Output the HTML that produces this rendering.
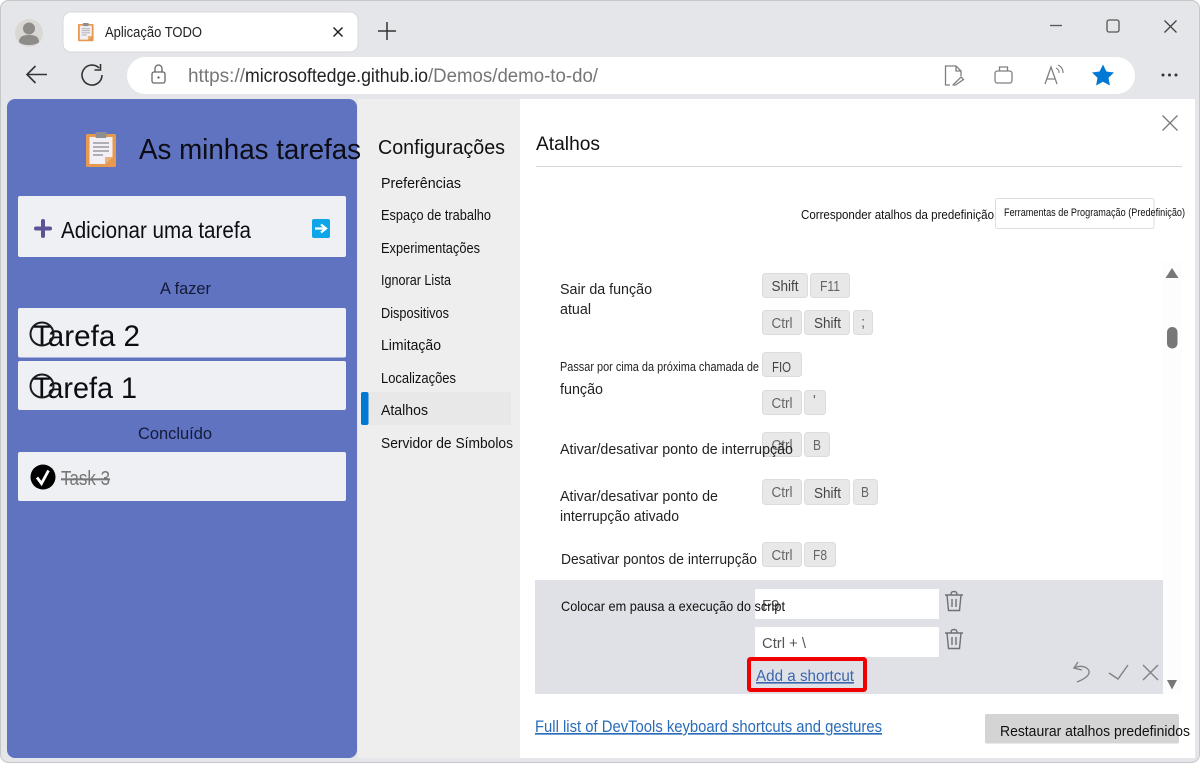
<!DOCTYPE html>
<html><head><meta charset="utf-8"><title>Aplicação TODO</title>
<style>
html,body{margin:0;padding:0;background:#fff;width:1200px;height:763px;overflow:hidden}
svg{display:block;filter:blur(.3px)}
text{font-family:"Liberation Sans",sans-serif;white-space:pre}
.k{fill:#e8e8e8;stroke:#dcdcdc;stroke-width:1}
.kt{font-size:15px;fill:#444}
.kg{font-size:15px;fill:#666}
.s{font-size:14.5px;fill:#111}
.r{font-size:15px;fill:#222}
.i{fill:none;stroke:#808184;stroke-width:1.4}
</style></head><body>
<svg width="1200" height="763" viewBox="0 0 1200 763" xmlns="http://www.w3.org/2000/svg">
<defs>
<g id="clip">
<rect x="0" y="2" width="30" height="33" rx="1.5" fill="#e79a4f"/>
<path d="M3.5 5H26.500V25L19 32H3.500Z" fill="#f2f0f6"/>
<path d="M19 32V25H26.500Z" fill="#e9b27a"/>
<rect x="9.500" y="0" width="11" height="6" rx="1" fill="#8f8f92"/>
<path d="M7 11H23M7 15H23M7 19H23M7 23H17" stroke="#9a9a9e" stroke-width="1.400"/>
</g>
<g id="trash" fill="none" stroke="#6f7175" stroke-width="1.400">
<path d="M0 4H18M6 4C6 1 7 .5 9 .5S12 1 12 4M2 4L3.500 19.500H14.500L16 4M7 8V16M11 8V16"/>
</g>
</defs>

<rect x="0.5" y="0.5" width="1199" height="762" rx="8" fill="#e5e6ea" stroke="#c6c7c9"/>

<!-- avatar -->
<circle cx="29" cy="33" r="14" fill="#d9d8d5"/>
<circle cx="29" cy="28.500" r="6" fill="#8e8c89"/>
<path d="M19 42C19 36 24 35 29 35S39 36 39 42C36 46 22 46 19 42Z" fill="#8e8c89"/>

<!-- tab -->
<rect x="63" y="12" width="295" height="40" rx="8" fill="#fff" stroke="#d8d9dc" stroke-width="1"/>
<g transform="translate(78 23) scale(.52)"><use href="#clip"/></g>
<text x="105" y="37" font-size="15" fill="#222" textLength="97" lengthAdjust="spacingAndGlyphs">Aplicação TODO</text>
<path d="M333.500 27.500L342.500 36.500M342.500 27.500L333.500 36.500" stroke="#222" stroke-width="1.500" fill="none"/>
<path d="M387 22V40M378 31H396" stroke="#333" stroke-width="1.500" fill="none"/>

<!-- window controls -->
<path d="M1050 25.500H1062" stroke="#555" stroke-width="1.300"/>
<rect x="1107" y="20" width="12" height="12" rx="2" fill="none" stroke="#555" stroke-width="1.300"/>
<path d="M1164.500 20.500L1176.500 32.500M1176.500 20.500L1164.500 32.500" stroke="#444" stroke-width="1.300"/>

<!-- nav -->
<path d="M47 74.500H27M35.500 66L27 74.500L35.500 83" fill="none" stroke="#333" stroke-width="1.600"/>
<path d="M99 67.900A10 10 0 1 0 102 75" fill="none" stroke="#333" stroke-width="1.600"/>
<path d="M94.500 70H100.500V64" fill="none" stroke="#333" stroke-width="1.600"/>

<!-- address bar -->
<rect x="127" y="57" width="1008" height="37" rx="18.500" fill="#fff"/>
<rect x="152" y="72" width="13" height="11" rx="2" fill="none" stroke="#666" stroke-width="1.300"/>
<path d="M155 72V68.500A3.500 3.500 0 0 1 162 68.500V72" fill="none" stroke="#666" stroke-width="1.300"/>
<circle cx="158.500" cy="77.500" r="1.100" fill="#555"/>
<text x="188" y="82" font-size="19" fill="#767676" textLength="57" lengthAdjust="spacingAndGlyphs">https://</text>
<text x="245" y="82" font-size="19" fill="#222" textLength="183" lengthAdjust="spacingAndGlyphs">microsoftedge.github.io</text>
<text x="428" y="82" font-size="19" fill="#767676" textLength="170" lengthAdjust="spacingAndGlyphs">/Demos/demo-to-do/</text>

<path d="M950 85H945.500V66H956L961 71V76M956 66V71H961M953 85L961 77L963.500 79.500L955.500 85H952.500Z" fill="none" stroke="#808080" stroke-width="1.300"/>
<rect x="995" y="71" width="17" height="12" rx="2.500" fill="none" stroke="#808080" stroke-width="1.300"/>
<path d="M999.500 71V67H1007.500V71" fill="none" stroke="#808080" stroke-width="1.300"/>
<path d="M1045 84L1051 67L1057 84M1047 79H1055" fill="none" stroke="#808080" stroke-width="1.300"/>
<path d="M1056 68A5 5 0 0 1 1059 73M1058 65A8 8 0 0 1 1063 73" fill="none" stroke="#808080" stroke-width="1.100"/>
<path d="M1103 64.500L1106.400 71.500L1114 72.500L1108.500 77.800L1109.900 85.500L1103 81.800L1096.100 85.500L1097.500 77.800L1092 72.500L1099.600 71.500Z" fill="#0078d4"/>
<circle cx="1163" cy="75" r="1.500" fill="#333"/><circle cx="1169.500" cy="75" r="1.500" fill="#333"/><circle cx="1176" cy="75" r="1.500" fill="#333"/>

<!-- panels -->
<rect x="358" y="99" width="162" height="659" fill="#eeeeee"/>
<rect x="520" y="99" width="675" height="659" fill="#fff"/>
<rect x="7" y="99" width="350" height="659" rx="8" fill="#5f73c1"/>

<!-- left app -->
<g transform="translate(86 132)"><use href="#clip"/></g>
<text x="139" y="159" font-size="29" fill="#0c0c14" textLength="222" lengthAdjust="spacingAndGlyphs">As minhas tarefas</text>
<rect x="18" y="196" width="328" height="61" rx="2" fill="#eef0f4"/>
<path d="M43 221V236M36 228.500H50" stroke="#5b5394" stroke-width="4" stroke-linecap="round"/>
<text x="61" y="238" font-size="23" fill="#0c0c14" textLength="190" lengthAdjust="spacingAndGlyphs">Adicionar uma tarefa</text>
<rect x="312" y="219" width="18" height="19" rx="2" fill="#0ea5e9"/>
<path d="M315 228.500H325M321 224.500L326 228.500L321 232.500" fill="none" stroke="#fff" stroke-width="2.200"/>
<text x="160" y="294" font-size="17" fill="#141a38" textLength="51" lengthAdjust="spacingAndGlyphs">A fazer</text>

<rect x="18" y="308" width="328" height="49.500" rx="2" fill="#eef0f4"/>
<text x="33" y="346" font-size="30" fill="#0c0c14" textLength="107" lengthAdjust="spacingAndGlyphs">Tarefa 2</text>
<circle cx="42" cy="334" r="11.500" fill="none" stroke="#1c1c1c" stroke-width="2"/>
<rect x="18" y="361" width="328" height="49" rx="2" fill="#eef0f4"/>
<text x="33" y="398" font-size="30" fill="#0c0c14" textLength="104" lengthAdjust="spacingAndGlyphs">Tarefa 1</text>
<circle cx="42" cy="386" r="11.500" fill="none" stroke="#1c1c1c" stroke-width="2"/>
<text x="138" y="439" font-size="17" fill="#141a38" textLength="74" lengthAdjust="spacingAndGlyphs">Concluído</text>
<rect x="18" y="452" width="328" height="49" rx="2" fill="#eef0f4"/>
<circle cx="43" cy="477" r="12.500" fill="#000"/>
<path d="M37 477.500L41.500 483.500L48.500 470.500" fill="none" stroke="#fff" stroke-width="2.800"/>
<text x="61" y="485" font-size="20" fill="#777" text-decoration="line-through" textLength="49" lengthAdjust="spacingAndGlyphs">Task 3</text>

<!-- sidebar -->
<rect x="361" y="392" width="150" height="33" fill="#e8e8e8"/>
<rect x="361" y="392" width="7.500" height="33" rx="2" fill="#0078d4"/>
<text x="378" y="154" font-size="20" fill="#111" textLength="127" lengthAdjust="spacingAndGlyphs">Configurações</text>
<text class="s" x="381" y="188" textLength="80" lengthAdjust="spacingAndGlyphs">Preferências</text>
<text class="s" x="381" y="220" textLength="110" lengthAdjust="spacingAndGlyphs">Espaço de trabalho</text>
<text class="s" x="381" y="253" textLength="99" lengthAdjust="spacingAndGlyphs">Experimentações</text>
<text class="s" x="381" y="285" textLength="70" lengthAdjust="spacingAndGlyphs">Ignorar Lista</text>
<text class="s" x="381" y="318" textLength="68" lengthAdjust="spacingAndGlyphs">Dispositivos</text>
<text class="s" x="381" y="350" textLength="60" lengthAdjust="spacingAndGlyphs">Limitação</text>
<text class="s" x="381" y="383" textLength="75" lengthAdjust="spacingAndGlyphs">Localizações</text>
<text class="s" x="381" y="415" textLength="47" lengthAdjust="spacingAndGlyphs">Atalhos</text>
<text class="s" x="381" y="448" textLength="132" lengthAdjust="spacingAndGlyphs">Servidor de Símbolos</text>

<!-- main -->
<text x="536" y="150" font-size="19" fill="#111" textLength="64" lengthAdjust="spacingAndGlyphs">Atalhos</text>
<rect x="536" y="166" width="646" height="1" fill="#d8d8d8"/>
<path d="M1162.500 115.500L1177.500 130.500M1177.500 115.500L1162.500 130.500" stroke="#777" stroke-width="1.300"/>
<text x="801" y="219" font-size="13" fill="#111" textLength="193" lengthAdjust="spacingAndGlyphs">Corresponder atalhos da predefinição</text>
<rect x="995.500" y="198.500" width="158.500" height="30" rx="2" fill="#fff" stroke="#dddddd"/>
<text x="1004" y="216" font-size="11" fill="#111" textLength="181" lengthAdjust="spacingAndGlyphs">Ferramentas de Programação (Predefinição)</text>

<!-- scrollbar column -->
<rect x="1163" y="262" width="19" height="432" fill="#fdfdfd"/>
<path d="M1172 268L1178.500 278H1165.500Z" fill="#777"/>
<rect x="1167" y="327" width="10.500" height="21.500" rx="5" fill="#777"/>

<!-- rows -->
<text class="r" x="560" y="294" textLength="92" lengthAdjust="spacingAndGlyphs">Sair da função</text>
<text class="r" x="560" y="314" textLength="31" lengthAdjust="spacingAndGlyphs">atual</text>

<rect class="k" x="762.500" y="273.500" width="45" height="24" rx="3"/><text class="kt" x="771.500" y="291" textLength="27" lengthAdjust="spacingAndGlyphs">Shift</text>
<rect class="k" x="810.500" y="273.500" width="39" height="24" rx="3"/><text class="kg" x="820" y="291" textLength="20" lengthAdjust="spacingAndGlyphs">F11</text>

<rect class="k" x="762.500" y="310.500" width="39" height="24" rx="3"/><text class="kg" x="771.500" y="328" textLength="21" lengthAdjust="spacingAndGlyphs">Ctrl</text>
<rect class="k" x="804.500" y="310.500" width="45" height="24" rx="3"/><text class="kt" x="814" y="328" textLength="27" lengthAdjust="spacingAndGlyphs">Shift</text>
<rect class="k" x="853.500" y="310.500" width="19" height="24" rx="3"/><text class="kg" x="861" y="327">;</text>

<text x="560" y="371" font-size="12.500" fill="#222" textLength="199" lengthAdjust="spacingAndGlyphs">Passar por cima da próxima chamada de</text>
<text class="r" x="560" y="394" textLength="43" lengthAdjust="spacingAndGlyphs">função</text>
<rect class="k" x="762.500" y="352.500" width="39" height="24" rx="3"/><text class="kt" x="772" y="372" textLength="19" lengthAdjust="spacingAndGlyphs">FIO</text>
<rect class="k" x="762.500" y="390.500" width="39" height="24" rx="3"/><text class="kg" x="771.500" y="408" textLength="21" lengthAdjust="spacingAndGlyphs">Ctrl</text>
<rect class="k" x="804.500" y="390.500" width="21" height="24" rx="3"/><text class="kg" x="813" y="405">'</text>

<rect class="k" x="762.500" y="432.500" width="39" height="24" rx="3"/><text class="kg" x="771.500" y="450" textLength="21" lengthAdjust="spacingAndGlyphs">Ctrl</text>
<rect class="k" x="804.500" y="432.500" width="25" height="24" rx="3"/><text class="kg" x="813" y="450" textLength="8" lengthAdjust="spacingAndGlyphs">B</text>
<text class="r" x="560" y="454" textLength="233" lengthAdjust="spacingAndGlyphs">Ativar/desativar ponto de interrupção</text>

<text class="r" x="560" y="501" textLength="158" lengthAdjust="spacingAndGlyphs">Ativar/desativar ponto de</text>
<text class="r" x="560" y="521" textLength="119" lengthAdjust="spacingAndGlyphs">interrupção ativado</text>
<rect class="k" x="762.500" y="479.500" width="39" height="25" rx="3"/><text class="kg" x="771.500" y="497" textLength="21" lengthAdjust="spacingAndGlyphs">Ctrl</text>
<rect class="k" x="804.500" y="479.500" width="45" height="25" rx="3"/><text class="kt" x="814" y="498" textLength="27" lengthAdjust="spacingAndGlyphs">Shift</text>
<rect class="k" x="853.500" y="479.500" width="24" height="25" rx="3"/><text class="kg" x="861" y="497" textLength="8" lengthAdjust="spacingAndGlyphs">B</text>

<text class="r" x="561" y="564" textLength="196" lengthAdjust="spacingAndGlyphs">Desativar pontos de interrupção</text>
<rect class="k" x="762.500" y="542.500" width="39" height="24" rx="3"/><text class="kg" x="771.500" y="560" textLength="21" lengthAdjust="spacingAndGlyphs">Ctrl</text>
<rect class="k" x="804.500" y="542.500" width="31" height="24" rx="3"/><text class="kg" x="813" y="560" textLength="14" lengthAdjust="spacingAndGlyphs">F8</text>

<!-- highlighted row -->
<rect x="535" y="580" width="628" height="114" fill="#dfe1e6"/>
<path d="M1172 689.500L1177 680H1167Z" fill="#777"/>
<rect x="755" y="589" width="184" height="30" rx="1" fill="#fff"/>
<rect x="755" y="627" width="184" height="30" rx="1" fill="#fff"/>
<text x="762" y="610" font-size="15" fill="#555">F9</text>
<text x="561" y="611" font-size="14" fill="#111" textLength="224" lengthAdjust="spacingAndGlyphs">Colocar em pausa a execução do script</text>
<text x="762" y="648" font-size="15" fill="#555" textLength="44" lengthAdjust="spacingAndGlyphs">Ctrl + \</text>
<g transform="translate(945 591)"><use href="#trash"/></g>
<g transform="translate(945 629)"><use href="#trash"/></g>
<rect x="749" y="659" width="116" height="31" rx="1.500" fill="none" stroke="#f00000" stroke-width="4"/>
<text x="756" y="681" font-size="16" fill="#3a66b0" text-decoration="underline" textLength="98" lengthAdjust="spacingAndGlyphs">Add a shortcut</text>
<path d="M1078 662L1074 668L1082 670M1074 668C1082 664 1090 668 1089 673C1088 677 1082 680 1077 682" class="i"/>
<path d="M1109 673L1118 679L1128 665" class="i"/>
<path d="M1143 665L1158 680M1158 665L1143 680" class="i"/>

<!-- footer -->
<text x="535" y="732" font-size="16.500" fill="#2a6cb8" text-decoration="underline" textLength="347" lengthAdjust="spacingAndGlyphs">Full list of DevTools keyboard shortcuts and gestures</text>
<rect x="985" y="714" width="194" height="29.500" rx="2" fill="#d4d4d4"/>
<text x="1000" y="736" font-size="15" fill="#111" textLength="190" lengthAdjust="spacingAndGlyphs">Restaurar atalhos predefinidos</text>
</svg>
</body></html>
